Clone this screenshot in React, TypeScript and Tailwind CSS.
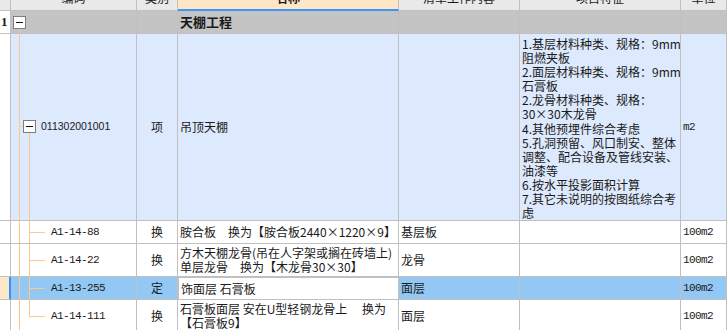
const cjk = "font-['Noto_Sans_CJK_SC',sans-serif]";
const mono = "font-['Liberation_Mono','Noto_Sans_CJK_SC',monospace] text-[11px] tracking-[-0.6px]";
const cell = "relative border-r border-b border-[#c0c0c0] overflow-hidden";
const tree = "absolute bg-[#fbc98c]";

const features = [
  "1.基层材料种类、规格：9mm",
  "阻燃夹板",
  "2.面层材料种类、规格：9mm",
  "石膏板",
  "2.龙骨材料种类、规格：",
  "30×30木龙骨",
  "4.其他预埋件综合考虑",
  "5.孔洞预留、风口制安、整体",
  "调整、配合设备及管线安装、",
  "油漆等",
  "6.按水平投影面积计算",
  "7.其它未说明的按图纸综合考",
  "虑",
];

const Minus = ({ className }: { className: string }) => (
  <div
    className={`absolute w-[13px] h-[13px] border border-[#7d7d7d] bg-white flex items-center justify-center ${className}`}
  >
    <div className="w-[7px] h-px bg-[#111]" />
  </div>
);

type Child = {
  code: string;
  kind: string;
  name: string[];
  work: string;
  last?: boolean;
  selected?: boolean;
};

const children: Child[] = [
  { code: "A1-14-88", kind: "换", name: ["胺合板　换为【胺合板2440×1220×9】"], work: "基层板" },
  {
    code: "A1-14-22",
    kind: "换",
    name: ["方木天棚龙骨(吊在人字架或搁在砖墙上)", "单层龙骨　换为【木龙骨30×30】"],
    work: "龙骨",
  },
  { code: "A1-13-255", kind: "定", name: ["饰面层 石膏板"], work: "面层", selected: true },
  {
    code: "A1-14-111",
    kind: "换",
    name: ["石膏板面层 安在U型轻钢龙骨上　 换为", "【石膏板9】"],
    work: "面层",
    last: true,
  },
];

const headers = ["编码", "类别", "名称", "清单工作内容", "项目特征", "单位"];

export default function App() {
  return (
    <div className={`w-[727px] h-[330px] overflow-hidden bg-white text-[#1a1a1a] ${cjk}`}>
      <div className="grid grid-cols-[11px_126px_41px_221px_121px_161px_1fr] grid-rows-[11px_23px_187px_23px_33px_23px_33px]">
        {/* header */}
        <div className={`${cell} bg-[#e9e9e9]`} />
        {headers.map((h) => (
          <div
            key={h}
            className={`${cell} text-center text-[12px] leading-[14px] ${
              h === "名称"
                ? "bg-[#fee6c7] font-bold border-b-2 border-b-[#3d96f5]"
                : "bg-[#e9e9e9]"
            }`}
          >
            <div className="-mt-[9px]">{h}</div>
          </div>
        ))}

        {/* 天棚工程 */}
        <div className={`${cell} bg-white flex items-center pl-px font-['Liberation_Serif',serif] font-bold text-[13px]`}>
          1
        </div>
        <div className={`${cell} bg-[#c4c4c4]`}>
          <Minus className="left-[2px] top-[5px]" />
          <div className={`${tree} left-[8px] w-px top-[18px] -bottom-px`} />
        </div>
        <div className={`${cell} bg-[#c4c4c4]`} />
        <div className={`${cell} bg-[#c4c4c4] flex items-center pl-[2px] font-bold text-[13px]`}>
          天棚工程
        </div>
        <div className={`${cell} bg-[#c4c4c4]`} />
        <div className={`${cell} bg-[#c4c4c4]`} />
        <div className={`${cell} bg-[#c4c4c4]`} />

        {/* 011302001001 */}
        <div className={`${cell} bg-white`} />
        <div className={`${cell} bg-[#dde9fc] flex items-center pl-[30px]`}>
          <div className={`${tree} left-[8px] w-px -top-px -bottom-px`} />
          <div className={`${tree} left-[8px] w-[4px] h-px top-[92px]`} />
          <Minus className="left-[12px] top-[86px]" />
          <div className={`${tree} left-[18px] w-px top-[99px] -bottom-px`} />
          <span className="font-['Liberation_Sans',sans-serif] text-[10.5px]">011302001001</span>
        </div>
        <div className={`${cell} bg-[#dde9fc] flex items-center justify-center text-[12px]`}>项</div>
        <div className={`${cell} bg-[#dde9fc] flex items-center pl-[2px] text-[12px]`}>吊顶天棚</div>
        <div className={`${cell} bg-[#dde9fc]`} />
        <div className={`${cell} bg-[#dde9fc] pl-[2px] pt-[3px] text-[12px] leading-[14.1px] whitespace-nowrap`}>
          {features.map((f, i) => (
            <div key={i}>{f}</div>
          ))}
        </div>
        <div className={`${cell} bg-[#dde9fc] flex items-center pl-[2px] ${mono}`}>m2</div>

        {/* children */}
        {children.map((c) => {
          const bg = c.selected ? "bg-[#94c8f4]" : "bg-white";
          return [
            <div
              key={c.code + "n"}
              className={`${cell} ${c.selected ? "bg-[#fde7c8] border-r-2 border-r-[#3d8ff0]" : "bg-white"}`}
            />,
            <div key={c.code + "c"} className={`${cell} ${bg} flex items-center pl-[40px] ${mono}`}>
              <div className={`${tree} left-[8px] w-px -top-px -bottom-px`} />
              <div className={`${tree} left-[18px] w-px -top-px ${c.last ? "bottom-1/2" : "-bottom-px"}`} />
              <div className={`${tree} left-[18px] w-[16px] h-px top-1/2`} />
              {c.code}
            </div>,
            <div key={c.code + "k"} className={`${cell} ${bg} flex items-center justify-center text-[12px]`}>
              {c.kind}
            </div>,
            <div
              key={c.code + "m"}
              className={`${cell} flex flex-col justify-center pl-[2px] text-[12px] leading-[14px] whitespace-nowrap ${
                c.selected ? "bg-white border-2 border-[#3b8ef0] -ml-px -mt-px" : bg
              }`}
            >
              {c.name.map((l) => (
                <div key={l}>{l}</div>
              ))}
            </div>,
            <div key={c.code + "w"} className={`${cell} ${bg} flex items-center pl-[2px] text-[12px]`}>
              {c.work}
            </div>,
            <div key={c.code + "f"} className={`${cell} ${bg}`} />,
            <div key={c.code + "u"} className={`${cell} ${bg} flex items-center pl-[2px] ${mono}`}>
              100m2
            </div>,
          ];
        })}
      </div>
    </div>
  );
}
